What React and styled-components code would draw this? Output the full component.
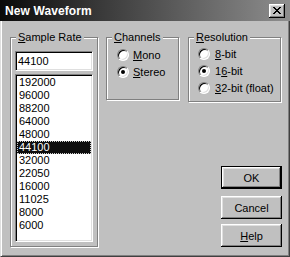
import React from 'react';
import styled, { createGlobalStyle, css } from 'styled-components';

const Global = createGlobalStyle`
  html, body { margin: 0; padding: 0; background: #c0c0c0; }
  body { font-family: "Liberation Sans", Arial, sans-serif; font-size: 11px; color: #000; }
  * { box-sizing: border-box; }
`;

const Window = styled.div`
  width: 290px;
  height: 257px;
  display: flex;
  flex-direction: column;
  background: #c0c0c0;
  overflow: hidden;
`;

const TitleBar = styled.div`
  height: 21px;
  flex: none;
  display: flex;
  align-items: center;
  justify-content: space-between;
  padding: 0 5px 0 5px;
  background: linear-gradient(to right, #0a0a0a 0%, #3a3a3a 35%, #8e8e8e 100%);
`;

const Title = styled.span`
  color: #fff;
  font-weight: bold;
  font-size: 12px;
  padding-top: 1px;
  letter-spacing: 0.1px;
`;

const CloseButton = styled.div`
  width: 16px;
  height: 14px;
  background: #c0c0c0;
  padding: 3px 0 0 4px;
  box-shadow: inset -1px -1px #000, inset 1px 1px #fff, inset -2px -2px #808080, inset 2px 2px #dfdfdf;
  svg { display: block; }
`;

const Body = styled.div`
  flex: 1;
  display: flex;
  align-items: flex-start;
  padding: 16px 0 0 9px;
  border-left: 1px solid #dfdfdf;
  border-right: 1px solid #404040;
  border-bottom: 1px solid #404040;
  box-shadow: inset 1px 0 #fff, inset -1px -1px #808080;
`;

const GroupBox = styled.div`
  position: relative;
  flex: none;
  width: ${p => p.$w}px;
  height: ${p => p.$h}px;
  margin-left: ${p => p.$ml || 0}px;
  padding: ${p => p.$pad};
  border: 1px solid #808080;
  box-shadow: inset 1px 1px #fff, 1px 1px #fff;
  display: flex;
  flex-direction: column;
`;

const Legend = styled.span`
  position: absolute;
  top: -7px;
  left: 5px;
  padding: 0 2px;
  line-height: 13px;
  background: #c0c0c0;
  white-space: nowrap;
`;

const U = styled.span`
  text-decoration: underline;
`;

const sunken = css`
  background: #fff;
  border: 1px solid;
  border-color: #808080 #fff #fff #808080;
  box-shadow: inset 1px 1px #000, inset -1px -1px #dfdfdf;
`;

const TextField = styled.div`
  ${sunken};
  height: 20px;
  padding-left: 2px;
  display: flex;
  align-items: center;
`;

const ListBox = styled.div`
  ${sunken};
  height: 168px;
  margin-top: 3px;
  padding: 1px;
`;

const Item = styled.div`
  height: 13px;
  line-height: 13px;
  padding-left: 2px;
  ${p => p.$selected && css`
    background: #0e0e0e;
    color: #fff;
    outline: 1px dotted #cfcfcf;
    outline-offset: -1px;
  `}
`;

const RadioRow = styled.div`
  display: flex;
  align-items: center;
  height: 17px;
  gap: ${p => p.$gap}px;
  white-space: nowrap;
`;

const RadioCircle = styled.span`
  position: relative;
  flex: none;
  width: 12px;
  height: 12px;
  border-radius: 50%;
  background: #fff;
  border: 1px solid;
  border-color: #808080 #fff #fff #808080;
  box-shadow: inset 1px 1px #000, inset -1px -1px #dfdfdf;
  &::after {
    content: '';
    display: ${p => (p.$checked ? 'block' : 'none')};
    position: absolute;
    left: 3px;
    top: 3px;
    width: 4px;
    height: 4px;
    border-radius: 50%;
    background: #000;
  }
`;

const RightColumn = styled.div`
  flex: none;
  width: 94px;
  margin-left: 9px;
  display: flex;
  flex-direction: column;
  align-items: flex-end;
`;

const Button = styled.div`
  width: 61px;
  height: 23px;
  margin-top: ${p => p.$mt}px;
  display: flex;
  align-items: center;
  justify-content: center;
  background: #c0c0c0;
  box-shadow: inset -1px -1px #000, inset 1px 1px #fff, inset -2px -2px #808080, inset 2px 2px #dfdfdf;
  ${p => p.$default && css`
    border: 1px solid #000;
  `}
`;

const rates = ['192000', '96000', '88200', '64000', '48000', '44100', '32000', '22050', '16000', '11025', '8000', '6000'];

function Radio({ checked, gap, children }) {
  return (
    <RadioRow $gap={gap}>
      <RadioCircle $checked={checked} />
      <span>{children}</span>
    </RadioRow>
  );
}

export default function App() {
  return (
    <>
      <Global />
      <Window>
        <TitleBar>
          <Title>New Waveform</Title>
          <CloseButton>
            <svg width="8" height="7" viewBox="0 0 8 7" shapeRendering="crispEdges">
              <path
                fill="#000"
                d="M0 0h2v1H0zM6 0h2v1H6zM1 1h2v1H1zM5 1h2v1H5zM2 2h4v1H2zM3 3h2v1H3zM2 4h4v1H2zM1 5h2v1H1zM5 5h2v1H5zM0 6h2v1H0zM6 6h2v1H6z"
              />
            </svg>
          </CloseButton>
        </TitleBar>
        <Body>
          <GroupBox $w={88} $h={210} $pad="13px 4px 4px 4px">
            <Legend><U>S</U>ample Rate</Legend>
            <TextField>44100</TextField>
            <ListBox>
              {rates.map(r => (
                <Item key={r} $selected={r === '44100'}>{r}</Item>
              ))}
            </ListBox>
          </GroupBox>
          <GroupBox $w={73} $h={63} $ml={8} $pad="8px 0 0 10px">
            <Legend><U>C</U>hannels</Legend>
            <Radio gap={4}><U>M</U>ono</Radio>
            <Radio gap={4} checked><U>S</U>tereo</Radio>
          </GroupBox>
          <RightColumn>
            <GroupBox $w={93} $h={65} $pad="7px 0 0 9px" style={{ alignSelf: 'flex-start' }}>
              <Legend><U>R</U>esolution</Legend>
              <Radio gap={5}><U>8</U>-bit</Radio>
              <Radio gap={5} checked>1<U>6</U>-bit</Radio>
              <Radio gap={5}><U>3</U>2-bit (float)</Radio>
            </GroupBox>
            <Button $mt={64} $default>OK</Button>
            <Button $mt={7}>Cancel</Button>
            <Button $mt={5}><U>H</U>elp</Button>
          </RightColumn>
        </Body>
      </Window>
    </>
  );
}
